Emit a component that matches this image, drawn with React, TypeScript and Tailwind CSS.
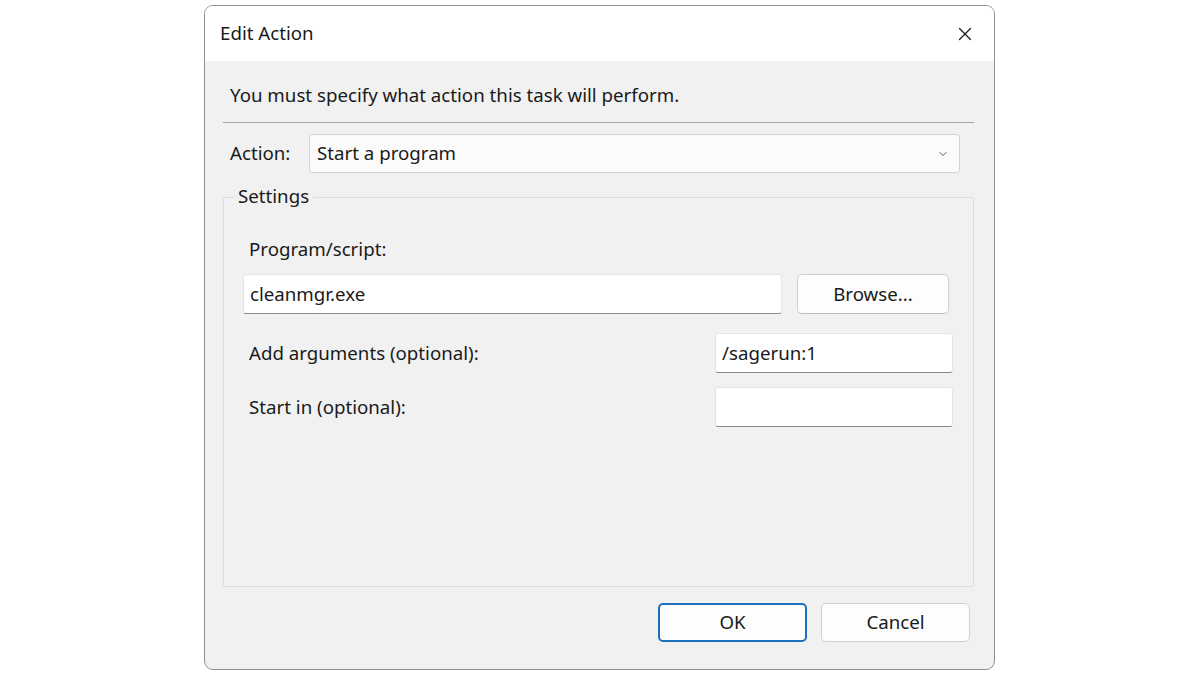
import { X, ChevronDown } from "lucide-react";

const font = { fontFamily: '"Noto Sans", "Segoe UI", sans-serif' };

function TextBox({ value, className }: { value?: string; className: string }) {
  return (
    <div
      className={`h-[40px] bg-white border border-[#e5e5e5] border-b-[#8a8a8a] rounded-[3px] px-[6px] flex items-center text-[18.7px] text-[#1a1a1a] ${className}`}
    >
      {value}
    </div>
  );
}

export default function App() {
  return (
    <div className="w-[1200px] h-[675px] bg-white flex justify-center pt-[5px] pr-[1px]" style={font}>
      <div className="w-[791px] h-[665px] rounded-[9px] border border-[#8f8f8f] bg-[#f1f1f1] overflow-hidden flex flex-col">
        {/* title bar */}
        <div className="h-[55px] bg-white flex items-center justify-between pl-[15px] pr-[18px] shrink-0">
          <span className="text-[18.7px] text-[#1a1a1a]">Edit Action</span>
          <X className="w-[22px] h-[22px] text-[#1a1a1a]" strokeWidth={1.4} />
        </div>

        <div className="flex-1 flex flex-col px-[18px]">
          <div className="pt-[21px] pl-[7px] text-[18.7px] text-[#1a1a1a] leading-[26px]">
            You must specify what action this task will perform.
          </div>
          <div className="mt-[14px] border-t border-[#a6a6a6] mr-[2px]" />

          {/* action row */}
          <div className="mt-[11px] flex items-center mr-[16px]">
            <span className="pl-[7px] w-[86px] text-[18.7px] text-[#1a1a1a]">Action:</span>
            <div className="flex-1 h-[39px] bg-[#fbfbfb] border border-[#d4d4d4] rounded-[3px] flex items-center justify-between pl-[7px] pr-[10px] text-[18.7px] text-[#1a1a1a]">
              <span>Start a program</span>
              <ChevronDown className="w-[12px] h-[12px] text-[#555]" strokeWidth={2} />
            </div>
          </div>

          {/* settings group */}
          <div className="relative mt-[24px] mr-[2px] h-[390px] border border-[#dddddd] rounded-[2px] flex flex-col px-[19px]">
            <span className="absolute -top-[14px] left-[10px] px-[4px] bg-[#f1f1f1] text-[18.7px] text-[#1a1a1a] leading-[24px]">
              Settings
            </span>
            <div className="mt-[38px] pl-[6px] text-[18.7px] text-[#1a1a1a] leading-[26px]">Program/script:</div>
            <div className="mt-[12px] flex items-center">
              <TextBox value="cleanmgr.exe" className="w-[539px]" />
              <button className="ml-[15px] w-[152px] h-[40px] rounded-[5px] bg-[#fdfdfd] border border-[#d0d0d0] border-b-[#bdbdbd] text-[18.7px] text-[#1a1a1a]">
                Browse...
              </button>
            </div>
            <div className="mt-[19px] flex items-center justify-between pr-[1px]">
              <span className="pl-[6px] text-[18.7px] text-[#1a1a1a]">Add arguments (optional):</span>
              <TextBox value="/sagerun:1" className="w-[238px]" />
            </div>
            <div className="mt-[14px] flex items-center justify-between pr-[1px]">
              <span className="pl-[6px] text-[18.7px] text-[#1a1a1a]">Start in (optional):</span>
              <TextBox className="w-[238px]" />
            </div>
          </div>

          {/* buttons */}
          <div className="mt-[16px] flex justify-end gap-[14px] pr-[6px]">
            <button className="w-[149px] h-[39px] rounded-[5px] bg-[#fdfdfd] border-2 border-[#1f6fbf] text-[18.7px] text-[#1a1a1a]">
              OK
            </button>
            <button className="w-[149px] h-[39px] rounded-[5px] bg-[#fdfdfd] border border-[#d0d0d0] text-[18.7px] text-[#1a1a1a]">
              Cancel
            </button>
          </div>
        </div>
      </div>
    </div>
  );
}
